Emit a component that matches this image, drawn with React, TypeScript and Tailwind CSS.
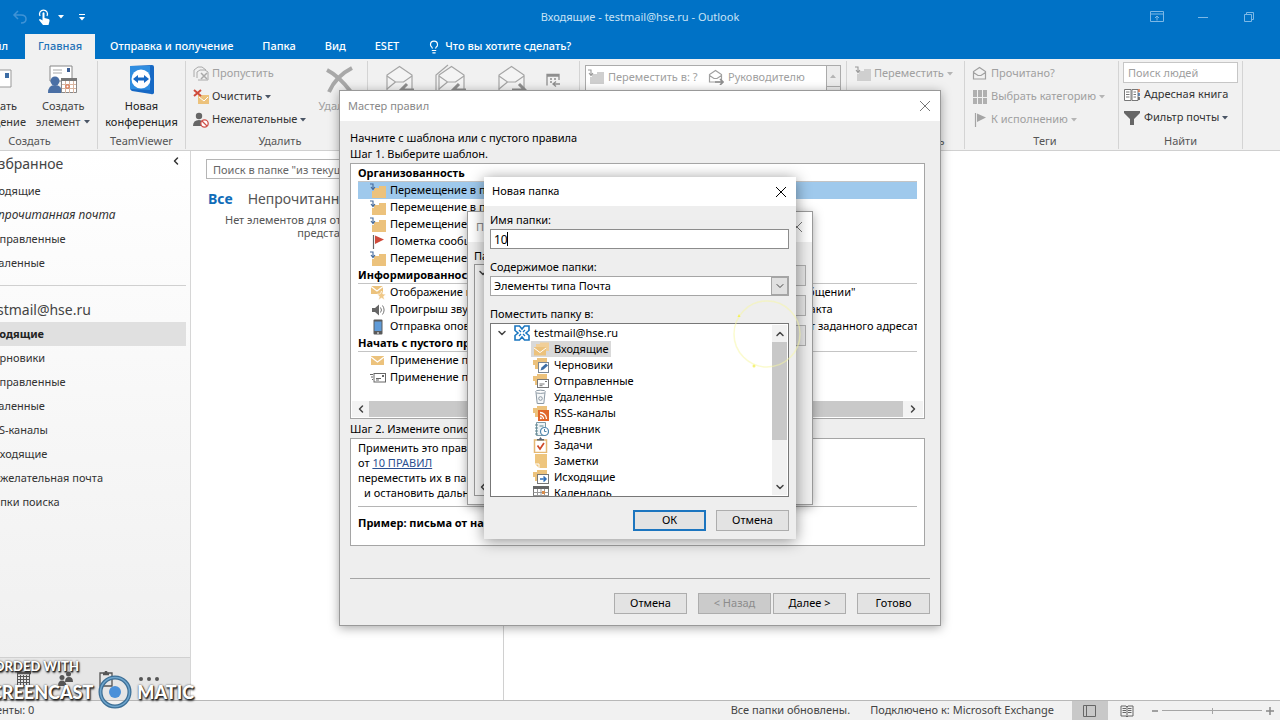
import type { ReactNode } from "react";
import { ChevronDown, ChevronLeft, ChevronRight, ChevronUp, Lightbulb } from "lucide-react";
import clsx from "clsx";

/* ---------- icons ---------- */

const Caret = ({ className = "text-gray-600" }: { className?: string }) => (
  <svg viewBox="0 0 6 4" className={clsx("w-1.5 h-1 shrink-0", className)}>
    <path d="M0 0h6L3 3.5z" fill="currentColor" />
  </svg>
);

const CloseX = ({ className }: { className?: string }) => (
  <svg viewBox="0 0 12 12" className={clsx("w-3 h-3", className)}>
    <path d="M1 1l10 10M11 1L1 11" stroke="currentColor" strokeWidth="1" fill="none" />
  </svg>
);

const FolderMove = ({ gray = false }: { gray?: boolean }) => (
  <svg viewBox="0 0 16 16" className="w-4 h-4 shrink-0">
    <path d="M4 5h5V3h7v12H2V8h2z" fill={gray ? "#cfcfcf" : "#ecc27c"} />
    <path d="M0 1h3v5M1 4l2 2.500L5 4" fill="none" stroke={gray ? "#999" : "#44699b"} strokeWidth="1.1" />
  </svg>
);

const FlagIcon = ({ gray = false }: { gray?: boolean }) => (
  <svg viewBox="0 0 16 16" className="w-4 h-4 shrink-0">
    <path d="M3.500 1v14" stroke={gray ? "#a5a5a5" : "#666"} strokeWidth="1.2" />
    <path d="M5 1.500L14 5.500L5 10z" fill={gray ? "#a5a5a5" : "#cf4a3a"} />
  </svg>
);

const MailStar = () => (
  <svg viewBox="0 0 16 16" className="w-4 h-4 shrink-0">
    <path d="M1 1h12v8H1z" fill="#ecc27c" />
    <path d="M1 1.500l6 4.500l6-4.500" fill="none" stroke="#fff" strokeWidth="1.200" />
    <path d="M11.500 6l1.300 3l3.200.2l-2.400 2.200l.9 3.600l-3-1.900l-3 1.900l.9-3.600L7 9.200l3.200-.2z" fill="#f0c887" stroke="#fff" strokeWidth=".6" />
  </svg>
);

const Speaker = () => (
  <svg viewBox="0 0 16 16" className="w-4 h-4 shrink-0">
    <path d="M2 6h3l4-3.500v11L5 10H2z" fill="#666" />
    <path d="M10.500 5.500q2 2.500 0 5M12.500 3.500q3.200 4.500 0 9" stroke="#777" fill="none" />
  </svg>
);

const Phone = () => (
  <svg viewBox="0 0 16 16" className="w-4 h-4 shrink-0">
    <rect x="3.500" y=".5" width="9" height="15" rx="1" fill="#5a5a5a" />
    <rect x="4.500" y="2.500" width="7" height="9.500" fill="#5f9bd8" />
    <path d="M7 14h2" stroke="#fff" />
  </svg>
);

const MailIcon = () => (
  <svg viewBox="0 0 16 16" className="w-4 h-4 shrink-0">
    <path d="M1 3h13v9H1z" fill="#ecc27c" />
    <path d="M1 4l6.500 5L14 4" fill="none" stroke="#fff" strokeWidth="1.200" />
  </svg>
);

const SentCard = () => (
  <svg viewBox="0 0 16 16" className="w-4 h-4 shrink-0">
    <rect x="4" y="3.500" width="11.500" height="8.500" fill="#fff" stroke="#666" />
    <path d="M0 4.500h3M1 7h2M2 9.500h1M6 8.500h5M6 10h3" stroke="#666" />
    <path d="M12 5h2v2h-2z" fill="#666" />
  </svg>
);

const ExchangeIcon = () => (
  <svg viewBox="0 0 16 16" className="w-4 h-4 shrink-0" fill="none" stroke="#1a76c0" strokeWidth="1.600">
    <path d="M1 5.500V1h4.500L8 4l2.500-3H15v4.500L12 8l3 2.500V15h-4.500L8 12l-2.500 3H1v-4.500L4 8z" />
    <path d="M5 5l2 2M11 5L9 7M5 11l2-2M11 11L9 9" strokeWidth="1.300" />
  </svg>
);

const FolderBase = ({ children }: { children?: ReactNode }) => (
  <svg viewBox="0 0 16 16" className="w-4 h-4 shrink-0">
    <path d="M0 3h4V1h10v11H2V8H0z" fill="#ecc27c" />
    {children}
  </svg>
);

const InboxFolder = () => (
  <svg viewBox="0 0 16 16" className="w-4 h-4 shrink-0">
    <path d="M3 3h4V1.500h9V10H3z" fill="#f1cf98" />
    <path d="M1 6h12v8.500H1z" fill="#ecc27c" />
    <path d="M1 7l6 4.500L13 7" fill="none" stroke="#fff" />
  </svg>
);

const DraftsFolder = () => (
  <FolderBase>
    <rect x="5.500" y="5.500" width="10" height="10" fill="#fff" stroke="#7b8794" />
    <path d="M7.500 13.500l1-3l4.500-4l2 2l-4.500 4z" fill="#3d6da5" />
  </FolderBase>
);

const SentFolder = () => (
  <FolderBase>
    <rect x="4.500" y="6.500" width="11" height="8" fill="#fff" stroke="#777" />
    <path d="M6.500 11h5M6.500 12.700h3M12 8.500h2" stroke="#777" />
  </FolderBase>
);

const TrashIcon = () => (
  <svg viewBox="0 0 16 16" className="w-4 h-4 shrink-0" fill="none" stroke="#8b98a3">
    <path d="M3 3.500l1.200 11h6.600L12 3.500" fill="#f5f7f8" />
    <ellipse cx="7.500" cy="2.800" rx="5" ry="1.600" fill="#fff" />
    <circle cx="7.500" cy="9.500" r="1.800" />
  </svg>
);

const RssFolder = () => (
  <FolderBase>
    <rect x="5" y="5" width="11" height="11" fill="#e0662b" />
    <path d="M7 10.500a3.500 3.500 0 0 1 3.500 3.500M7 7.500a6.500 6.500 0 0 1 6.500 6.500" fill="none" stroke="#fff" strokeWidth="1.300" />
    <circle cx="7.900" cy="13.200" r="1" fill="#fff" />
  </FolderBase>
);

const JournalIcon = () => (
  <svg viewBox="0 0 16 16" className="w-4 h-4 shrink-0" fill="none">
    <path d="M3.500 1.500h9v13h-9z" fill="#eef4f6" stroke="#7d9aa5" />
    <path d="M2 4h3M2 7h3M2 10h3M2 13h3M6.500 5h4" stroke="#5f8590" />
    <circle cx="11.500" cy="10.500" r="4" fill="#fff" stroke="#4f87ad" strokeWidth="1.200" />
    <path d="M11.500 8v2.500h2" stroke="#4f87ad" />
  </svg>
);

const TasksIcon = () => (
  <svg viewBox="0 0 16 16" className="w-4 h-4 shrink-0">
    <path d="M1.500 3h12v12.500h-12z" fill="#fff" stroke="#e5b873" strokeWidth="1.500" />
    <path d="M4 3.500h7V2H9L7.500 0L6 2H4z" fill="#5a6470" />
    <path d="M4.500 8.500l2.500 3.500l4-6" fill="none" stroke="#cf4a2a" strokeWidth="1.700" />
  </svg>
);

const NotesIcon = () => (
  <svg viewBox="0 0 16 16" className="w-4 h-4 shrink-0">
    <path d="M2 1h12v14H6l-4-4z" fill="#eec57d" />
    <path d="M2 11h4v4" fill="none" stroke="#fff" />
  </svg>
);

const OutboxFolder = () => (
  <FolderBase>
    <rect x="4.500" y="5.500" width="11" height="9" fill="#fff" stroke="#777" />
    <path d="M7 10h6M10.500 7.500L13 10l-2.500 2.500" fill="none" stroke="#2f6db5" strokeWidth="1.500" />
  </FolderBase>
);

const CalendarIcon = () => (
  <svg viewBox="0 0 16 16" className="w-4 h-4 shrink-0">
    <path d="M.5 1.500h15v13H.5z" fill="#fff" stroke="#777" />
    <path d="M0 1h16v3H0z" fill="#666" />
    <path d="M.5 7.500h15M.5 10.500h15M4.500 4v11M8 4v11M11.500 4v11" stroke="#999" />
    <rect x="9" y="6" width="3" height="3" fill="#d98c4a" />
  </svg>
);

/* Large envelope with an arrow, used by the reply and forward buttons */
const Envelope = ({ double = false, forward = false }: { double?: boolean; forward?: boolean }) => (
  <svg viewBox="0 0 32 32" className="w-8 h-8 shrink-0" fill="none" stroke="#a5a5a5" strokeWidth="1.200">
    {double && <path d="M1 28V11L13 1" />}
    <path d="M4 30V11l12.500-8.500L29 11v19z" fill="#f4f4f4" />
    <path d="M4 12l8.500 6h8l8.500-6M12.500 18L4 25" />
    {forward ? (
      <path d="M17 26h12M24 20l6 6l-6 6" stroke="#8f8f8f" strokeWidth="3" />
    ) : (
      <path d="M18 26h13M24 20l-6 6l6 6" stroke="#8f8f8f" strokeWidth="3" />
    )}
  </svg>
);

const SmallMail = ({ arrow = false }: { arrow?: boolean }) => (
  <svg viewBox="0 0 16 16" className="w-4 h-4 shrink-0" fill="none" stroke="#a0a0a0" strokeWidth="1.200">
    <path d="M1.500 13V5.500L7.500 1.500l6 4V13zM1.500 6.500L6 9.500h3l4.500-3" />
    {arrow && <path d="M7 13h8M12 10l3 3l-3 3" stroke="#8f8f8f" strokeWidth="1.600" />}
  </svg>
);

/* ---------- ribbon ---------- */

interface GroupProps {
  label: string;
  className: string;
  children: ReactNode;
}

function Group({ label, className, children }: GroupProps) {
  return (
    <section className={clsx("flex flex-col shrink-0 pt-px border-r border-[#d4d4d4] h-[88px]", className)}>
      <div className="flex-1 flex">{children}</div>
      <p className="text-center leading-4 text-[#555]">{label}</p>
    </section>
  );
}

interface SmallButtonProps {
  icon: ReactNode;
  text: string;
  caret?: boolean;
  disabled?: boolean;
}

function SmallButton({ icon, text, caret, disabled }: SmallButtonProps) {
  return (
    <button
      disabled={disabled}
      className={clsx("flex items-center gap-[3px] h-[23px] whitespace-nowrap", disabled ? "text-[#a0a0a0]" : "text-[#333]")}
    >
      {icon}
      {text}
      {caret && <Caret className={disabled ? "text-[#b5b5b5]" : "text-gray-600"} />}
    </button>
  );
}

function Ribbon() {
  return (
    <div className="flex items-start pt-0.5 h-[92px] shrink-0 bg-[#f1f1f1] border-b border-[#d0d0d0] text-[11px] overflow-hidden">
      <Group label="Создать" className="w-[136px] -ml-[38px]">
        <button className="w-[68px] flex flex-col items-center leading-4 text-[#333] pt-0.5">
          <svg viewBox="0 0 32 32" className="w-8 h-8 mb-0.5">
            <path d="M3 6h28v17H3z" fill="#fff" stroke="#999" />
            <path d="M25 9h4v5h-4z" fill="#3d6da5" />
            <path d="M9 15h9M9 18h9" stroke="#999" />
          </svg>
          Создать сообщение
        </button>
        <button className="w-[68px] flex flex-col items-center leading-4 text-[#444] pt-0.5">
          <svg viewBox="0 0 32 32" className="w-8 h-8 mb-0.5">
            <path d="M3 2h22v15H3z" fill="#fff" stroke="#888" />
            <path d="M20 4h3v4h-3z" fill="#3d5f95" />
            <path d="M6 6h9M6 9h9" stroke="#aaa" />
            <circle cx="8" cy="17" r="4.500" fill="#4a6fa5" />
            <path d="M1 29q0-8 7-8t7 8z" fill="#4a6fa5" />
            <path d="M14.500 14.500h15v14h-15z" fill="#fff" stroke="#888" />
            <path d="M14 14h16v3H14z" fill="#777" />
            <path d="M15 20.500h14M15 24.500h14M18.500 17v12M22.500 17v12M26.500 17v12" stroke="#d9b5a0" />
            <path d="M19 21h3v3h-3z" fill="none" stroke="#d86b40" />
          </svg>
          Создать
          <span className="flex items-center gap-1">элемент <Caret /></span>
        </button>
      </Group>
      <Group label="TeamViewer" className="w-[88px]">
        <button className="w-full flex flex-col items-center leading-4 text-[#222] pt-0.5">
          <svg viewBox="0 0 32 32" className="w-8 h-8 mb-0.5">
            <path d="M4 2l22-1q2 0 2 2v26q-1 2-3 1L6 27q-2-1-2-3z" fill="#1668c4" />
            <path d="M4 2h20v24L4 25z" fill="#2f8de0" />
            <circle cx="15" cy="15" r="9.500" fill="#fff" />
            <path d="M7 15l5-4v2.500h6V11l5 4l-5 4v-2.500h-6V19z" fill="#1668c4" />
          </svg>
          Новая
          <span>конференция</span>
        </button>
      </Group>
      <Group label="Удалить" className="w-[182px] pl-[7px]">
        <div className="flex flex-col w-[120px]">
          <SmallButton
            disabled
            text="Пропустить"
            icon={
              <svg viewBox="0 0 16 16" className="w-4 h-4 shrink-0" fill="none" stroke="#aaa">
                <path d="M1 11V4l4-3h4l4 3M4 12V6l3-2h5l3 2v8H5" />
                <path d="M8 7l6 6M14 7l-6 6" strokeWidth="1.500" />
              </svg>
            }
          />
          <SmallButton
            text="Очистить"
            caret
            icon={
              <svg viewBox="0 0 16 16" className="w-4 h-4 shrink-0">
                <path d="M5 6h11v9H5z" fill="#ecc27c" />
                <path d="M6 8l5 4l4-4" fill="none" stroke="#fff" />
                <path d="M1 1l7 6M8 1L1 7" stroke="#cf4a3a" strokeWidth="2" />
              </svg>
            }
          />
          <SmallButton
            text="Нежелательные"
            caret
            icon={
              <svg viewBox="0 0 16 16" className="w-4 h-4 shrink-0">
                <circle cx="6" cy="4" r="3.200" fill="#666" />
                <path d="M0 14q0-6 6-6t5 6z" fill="#666" />
                <circle cx="11.500" cy="11.500" r="3.700" fill="#fff" stroke="#d0504a" strokeWidth="1.300" />
                <path d="M9 9l5 5" stroke="#d0504a" strokeWidth="1.300" />
              </svg>
            }
          />
        </div>
        <button disabled className="flex flex-col items-center w-[54px] text-[#a0a0a0] leading-4 pt-0.5">
          <svg viewBox="0 0 32 32" className="w-8 h-8 mb-0.5">
            <path d="M3 6q12 6 24 22M28 4Q12 12 5 28" fill="none" stroke="#a8a8a8" strokeWidth="4" />
          </svg>
          Удалить
        </button>
      </Group>
      <Group label="Ответить" className="w-[212px] pl-[15px]">
        <div className="flex items-start gap-5 pt-0.5">
          <button disabled aria-label="Ответить"><Envelope /></button>
          <button disabled aria-label="Ответить всем"><Envelope double /></button>
          <button disabled aria-label="Переслать" className="pl-2"><Envelope forward /></button>
        </div>
        <button disabled aria-label="Собрание" className="self-start pt-2.5 pl-[18px]">
          <svg viewBox="0 0 16 16" className="w-4 h-4" fill="none" stroke="#8f8f8f">
            <path d="M2 13.500V2.500h12V8M2 4h12M5 7h2M9 7h2M5 10h2" strokeWidth="1.300" />
            <path d="M8 12h7M11 9.500L8 12l3 2.500" strokeWidth="1.300" />
          </svg>
        </button>
      </Group>
      <Group label="Быстрые действия" className="w-[267px] px-[5px]">
        <div className="flex-1 flex h-[66px] mt-[3px] border border-[#ababab] bg-white text-[#a0a0a0]">
          <div className="flex-1 grid grid-cols-[120px_1fr] auto-rows-[22px] pl-0.5">
            <button disabled className="flex items-center gap-1 whitespace-nowrap"><FolderMove gray />Переместить в: ?</button>
            <button disabled className="flex items-center gap-1"><SmallMail arrow />Руководителю</button>
            <button disabled className="flex items-center gap-1 whitespace-nowrap"><SmallMail />Сообщение</button>
            <button disabled className="flex items-center gap-1"><SmallMail />Готово</button>
          </div>
          <div className="w-3.5 border-l border-[#ababab] bg-[#ececec] flex flex-col">
            <button disabled aria-label="Вверх" className="h-[21px] border-t border-[#ababab] flex items-center justify-center rotate-180">
              <Caret className="text-[#b5b5b5]" />
            </button>
          </div>
        </div>
      </Group>
      <Group label="Переместить" className="w-[118px] pl-2">
        <div className="flex flex-col">
          <SmallButton disabled caret text="Переместить" icon={<FolderMove gray />} />
        </div>
      </Group>
      <Group label="Теги" className="w-[154px] pl-[7px]">
        <div className="flex flex-col">
          <SmallButton disabled text="Прочитано?" icon={<SmallMail />} />
          <SmallButton
            disabled
            caret
            text="Выбрать категорию"
            icon={
              <svg viewBox="0 0 16 16" className="w-4 h-4 shrink-0" fill="#b0b0b0">
                <path d="M1 1h4v7H1zM6 1h4v7H6zM11 1h4v7h-4zM1 9h4v6H1zM6 9h4v6H6zM11 9h4v6h-4z" />
              </svg>
            }
          />
          <SmallButton disabled caret text="К исполнению" icon={<FlagIcon gray />} />
        </div>
      </Group>
      <Group label="Найти" className="w-[124px] px-1">
        <div className="flex flex-col w-full">
          <input
            aria-label="Поиск людей"
            placeholder="Поиск людей"
            className="w-full h-[21px] border border-[#c6c6c6] bg-white px-1 placeholder:text-[#a0a0a0]"
          />
          <SmallButton
            text="Адресная книга"
            icon={
              <svg viewBox="0 0 16 16" className="w-[18px] h-4 shrink-0" fill="none" stroke="#777">
                <path d="M.5 2.500h6.500v11H.5zM8 2.500h6v11H8z" fill="#fff" />
                <path d="M2 5h3.500M2 7.500h3.500M2 10h3.500M9.500 5H12M9.500 7.500H12M9.500 10H12" />
                <path d="M15 2v3" stroke="#d86b40" strokeWidth="1.500" />
                <path d="M15 6v3" stroke="#3d6da5" strokeWidth="1.500" />
                <path d="M15 10v3" stroke="#555" strokeWidth="1.500" />
              </svg>
            }
          />
          <SmallButton
            text="Фильтр почты"
            caret
            icon={
              <svg viewBox="0 0 16 16" className="w-[18px] h-4 shrink-0" fill="#666">
                <path d="M0 1h16v2l-6 6v6H6V9L0 3z" />
              </svg>
            }
          />
        </div>
      </Group>
    </div>
  );
}

function TitleBar() {
  return (
    <header className="bg-[#0072c6] text-white shrink-0">
      <div className="grid grid-cols-[1fr_auto_1fr] items-center h-[34px]">
        <div className="flex items-center pl-3">
          <button aria-label="Отменить" className="w-4 h-4 text-[#3f93d6]">
            <svg viewBox="0 0 16 16" fill="none" stroke="currentColor" strokeWidth="1.500">
              <path d="M6 2L2 6l4 4M2 6h7q5 0 5 4t-5 4" />
            </svg>
          </button>
          <button aria-label="Сенсорный режим" className="flex items-center gap-1.5 ml-2">
            <svg viewBox="0 0 16 18" className="w-4 h-[18px]">
              <path d="M4 8a4 4 0 1 1 7 0" fill="none" stroke="#fff" strokeWidth="1.300" />
              <path d="M6.500 5q1-1.500 2 0v5l4 1q1.500.5 1 2l-1 4H7l-4-5q.5-1.500 2-.5l1.500 1z" fill="#fff" />
            </svg>
            <Caret className="text-white" />
          </button>
          <button aria-label="Настройка панели" className="ml-[15px] flex flex-col items-center gap-0.5">
            <span className="w-1.5 h-px bg-white" />
            <Caret className="text-white" />
          </button>
        </div>
        <h1 className="text-[11px] text-[#c8e2f5]">Входящие - testmail@hse.ru - Outlook</h1>
        <div className="flex justify-end pr-2 text-[#7db8e6]">
          <button aria-label="Параметры ленты" className="w-[46px] flex justify-center">
            <svg viewBox="0 0 14 12" className="w-3.5 h-3" fill="none" stroke="currentColor">
              <path d="M.5.5h13v10H.5zM.5 3h13M7 9.500V5M5 7l2-2l2 2" />
            </svg>
          </button>
          <button aria-label="Свернуть" className="w-[46px] flex justify-center items-center">
            <span className="w-2.5 h-px bg-current" />
          </button>
          <button aria-label="Восстановить" className="w-[46px] flex justify-center">
            <svg viewBox="0 0 12 12" className="w-3 h-3" fill="none" stroke="currentColor">
              <path d="M1.500 3.500h7v7h-7zM3.500 3.500v-2h7v7h-2" />
            </svg>
          </button>
        </div>
      </div>
      <nav className="flex h-[25px] text-[11px] font-medium overflow-hidden">
        <button className="w-[60px] -ml-[35px] pl-3.5 text-left">Файл</button>
        <button className="w-[70px] bg-[#f1f1f1] text-[#1f72b8]">Главная</button>
        <button className="ml-[15px]">Отправка и получение</button>
        <button className="ml-[29px]">Папка</button>
        <button className="ml-[29px]">Вид</button>
        <button className="ml-[29px]">ESET</button>
        <button className="ml-7 flex items-center gap-1">
          <Lightbulb className="w-3.5 h-3.5" strokeWidth={2} />
          Что вы хотите сделать?
        </button>
      </nav>
    </header>
  );
}

/* ---------- main area ---------- */

const favourites = ["Входящие", "Непрочитанная почта", "Отправленные", "Удаленные"];
const mailbox = ["Входящие", "Черновики", "Отправленные", "Удаленные", "RSS-каналы", "Исходящие", "Нежелательная почта", "Папки поиска"];

function Sidebar() {
  return (
    <aside className="w-[191px] shrink-0 flex flex-col overflow-hidden border-r border-[#d6d6d6] bg-linear-to-b from-white to-[#efefef] text-[11px] text-[#333]">
      <div className="flex items-center justify-between h-7 pr-2 pb-0.5">
        <h2 className="-ml-3 text-sm text-[#444]">Избранное</h2>
        <button aria-label="Свернуть область папок" className="pb-1.5"><ChevronLeft className="w-3 h-3" strokeWidth={3} /></button>
      </div>
      <ul>
        {favourites.map((name, i) => (
          <li key={name} className={clsx("h-6 leading-6", i === 1 ? "-ml-4 text-xs italic" : "-ml-3.5")}>{name}</li>
        ))}
      </ul>
      <hr className="mt-2.5 mr-1 border-[#d0d0d0]" />
      <h2 className="-ml-4 mt-3 h-6 leading-6 text-sm text-[#444]">testmail@hse.ru</h2>
      <ul>
        {mailbox.map((name, i) => (
          <li key={name} className={clsx("h-6 leading-6 mr-1", i === 0 && "bg-[#e0e0e0] font-bold text-[#222]")}>
            <span className="inline-block -ml-3.5">{name}</span>
          </li>
        ))}
      </ul>
      <nav className="mt-auto h-[43px] border-t border-[#d0d0d0] bg-[#e6e6e6] flex items-center pl-4 gap-[25px] text-[#555]">
        <button aria-label="Календарь">
          <svg viewBox="0 0 16 16" className="w-4 h-4" fill="none" stroke="currentColor">
            <path d="M1.500 1v14M4.500 4v11M7.500 4v11M10.500 4v11M13.500 1v14M1 5.500h13M1 8.500h13M1 11.500h13M1 14.500h13" />
            <path d="M1 2h14" strokeWidth="2.500" />
          </svg>
        </button>
        <button aria-label="Люди">
          <svg viewBox="0 0 16 16" className="w-4 h-4" fill="currentColor">
            <circle cx="11.500" cy="3" r="2.500" />
            <path d="M8 11q0-5 4-5t4 5z" />
            <circle cx="5" cy="6.500" r="2.500" />
            <path d="M1 15q0-5.500 4-5.500t4.500 5.500z" />
          </svg>
        </button>
        <button aria-label="Задачи">
          <svg viewBox="0 0 16 16" className="w-4 h-4" fill="none" stroke="currentColor" strokeWidth="1.300">
            <path d="M2 2h12v13H2z" />
            <path d="M5 3h6M8 0v3" strokeWidth="2.500" />
          </svg>
        </button>
        <button aria-label="Другое">
          <svg viewBox="0 0 20 4" className="w-5 h-1" fill="currentColor">
            <circle cx="2" cy="2" r="2" />
            <circle cx="10" cy="2" r="2" />
            <circle cx="18" cy="2" r="2" />
          </svg>
        </button>
      </nav>
    </aside>
  );
}

function MessageList() {
  return (
    <section className="w-[313px] shrink-0 border-r border-[#d0d0d0] pl-[15px] pr-3 pt-2">
      <input
        aria-label="Поиск в папке"
        placeholder={'Поиск в папке "из текущего почтового ящика"'}
        className="block w-full h-5 border border-[#b5b5b5] px-1.5 text-[11px] placeholder:text-[#666]"
      />
      <div className="flex gap-[15px] mt-2 pl-0.5 text-sm leading-6">
        <button className="font-bold text-[#0f6cb8]">Все</button>
        <button className="text-[#555]">Непрочитанные</button>
      </div>
      <p className="mr-[18px] mt-0.5 text-center text-[11px] leading-[13px] text-[#555]">
        Нет элементов для отображения в данном
        <br />
        представлении.
      </p>
    </section>
  );
}

function StatusBar() {
  return (
    <footer className="h-5 shrink-0 flex items-center border-t border-[#b8b8b8] bg-[#f1f1f1] text-[11px] text-[#444]">
      <span className="-ml-8">Элементы: 0</span>
      <span className="ml-auto">Все папки обновлены.</span>
      <span className="ml-5">Подключено к: Microsoft Exchange</span>
      <button aria-label="Обычный" className="ml-[18px] w-9 h-full bg-[#c8c8c8] flex items-center justify-center">
        <svg viewBox="0 0 14 14" className="w-3.5 h-3.5" fill="none" stroke="#666">
          <path d="M.5 1.500h12v11H.5zM3.500 1.500v11" />
        </svg>
      </button>
      <button aria-label="Чтение" className="w-[38px] flex justify-center">
        <svg viewBox="0 0 14 14" className="w-3.5 h-3.5" fill="none" stroke="#666">
          <path d="M1 2h5l1 1l1-1h5v10H8l-1 1l-1-1H1zM7 3v10M2.500 4.500H6M2.500 6.500H6M2.500 8.500H6M8 4.500h3.500M8 6.500h3.500M8 8.500h3.500" />
        </svg>
      </button>
      <button aria-label="Уменьшить" className="ml-1.5 w-1.5 h-0.5 bg-[#a0a0a0]" />
      <input
        type="range"
        aria-label="Масштаб"
        defaultValue={50}
        className="ml-1 w-[100px] h-px appearance-none bg-[#a5a5a5] [&::-webkit-slider-thumb]:appearance-none [&::-webkit-slider-thumb]:w-px [&::-webkit-slider-thumb]:h-1.5 [&::-webkit-slider-thumb]:bg-[#a5a5a5]"
      />
      <button aria-label="Увеличить" className="ml-1 mr-1.5">
        <svg viewBox="0 0 8 8" className="w-2 h-2"><path d="M4 0v8M0 4h8" stroke="#888" strokeWidth="1.500" /></svg>
      </button>
    </footer>
  );
}

/* ---------- dialogs ---------- */

interface DialogProps {
  title: string;
  className: string;
  active?: boolean;
  children: ReactNode;
}

function Dialog({ title, className, active, children }: DialogProps) {
  return (
    <div className="absolute inset-0 pb-1 flex items-center justify-center">
      <div
        role="dialog"
        aria-label={title}
        className={clsx(
          "bg-[#eee] text-[11px] text-black",
          active ? "shadow-[0_2px_14px_rgba(0,0,0,0.45)]" : "border border-[#999] shadow-[0_2px_10px_rgba(0,0,0,0.35)]",
          className
        )}
      >
        <div className={clsx("flex items-center justify-between bg-white pl-2 pr-[9px]", active ? "h-[29px]" : "h-[30px] text-[#888]")}>
          <h2>{title}</h2>
          <button aria-label="Закрыть"><CloseX className={active ? "text-black" : "text-[#777]"} /></button>
        </div>
        {children}
      </div>
    </div>
  );
}

function DialogButton({ text, primary, disabled }: { text: string; primary?: boolean; disabled?: boolean }) {
  return (
    <button
      disabled={disabled}
      className={clsx(
        "w-[73px] h-[21px] shrink-0",
        primary ? "border-2 border-[#1c75bf]" : "border border-[#adadad]",
        disabled ? "bg-[#cbcbcb] text-[#8c8c8c]" : "bg-[#e3e3e3]"
      )}
    >
      {text}
    </button>
  );
}

const templates = [
  {
    heading: "Организованность",
    rows: [
      { icon: <FolderMove />, text: "Перемещение в папку сообщений от контакта" },
      { icon: <FolderMove />, text: "Перемещение в папку сообщений со словами" },
      { icon: <FolderMove />, text: "Перемещение сообщений для общей группы" },
      { icon: <FlagIcon />, text: "Пометка сообщений от указанного контакта" },
      { icon: <FolderMove />, text: "Перемещение элементов RSS в папку" },
    ],
  },
  {
    heading: "Информированность",
    rows: [
      { icon: <MailStar />, text: 'Отображение почты от указанного контакта в окне "Оповещение о новом сообщении"' },
      { icon: <Speaker />, text: "Проигрыш звука при получении электронных сообщений от выбранного контакта" },
      { icon: <Phone />, text: "Отправка оповещения на мобильное устройство при получении сообщений от заданного адресата" },
    ],
  },
  {
    heading: "Начать с пустого правила",
    rows: [
      { icon: <MailIcon />, text: "Применение правила к полученным сообщениям" },
      { icon: <SentCard />, text: "Применение правила к отправленным сообщениям" },
    ],
  },
];

function RulesWizard() {
  return (
    <Dialog title="Мастер правил" className="w-[602px]">
      <div className="px-2.5 pt-[9px] pb-[11px]">
        <p className="leading-4">Начните с шаблона или с пустого правила</p>
        <p className="leading-4">Шаг 1. Выберите шаблон.</p>
        <div className="mt-px mr-[5px] border border-[#a5a5a5] bg-white">
          <div className="px-[7px] pt-px">
            {templates.map((group) => (
              <section key={group.heading}>
                <h3 className="h-[17px] leading-4 font-bold border-b border-[#c4c4c4]">{group.heading}</h3>
                <ul>
                  {group.rows.map((row, i) => (
                    <li
                      key={row.text}
                      className={clsx(
                        "flex items-center gap-1 h-[17px] pl-3 overflow-hidden whitespace-nowrap",
                        group === templates[0] && i === 0 && "bg-[#9fc9ec]"
                      )}
                    >
                      {row.icon}
                      {row.text}
                    </li>
                  ))}
                </ul>
              </section>
            ))}
          </div>
          <div className="mt-[15px] mb-px mx-px flex h-4 bg-[#f3f3f3] text-[#444]">
            <button aria-label="Влево" className="w-[17px] flex items-center justify-center"><ChevronLeft className="w-3 h-3" strokeWidth={3} /></button>
            <div className="flex-1 bg-[#c9c9c9]" />
            <button aria-label="Вправо" className="w-5 flex items-center justify-center"><ChevronRight className="w-3 h-3" strokeWidth={3} /></button>
          </div>
        </div>
        <p className="mt-0.5 leading-4">Шаг 2. Измените описание правила</p>
        <div className="mt-px mr-[5px] px-[7px] pt-px h-[108px] border border-[#a5a5a5] bg-white leading-[15px]">
          <p>Применить это правило после получения</p>
          <p>от <a href="#rule" className="underline text-[#2b4f91]">10 ПРАВИЛ</a></p>
          <p>переместить их в папку</p>
          <p className="pl-1.5">и остановить дальнейшую обработку правил</p>
          <hr className="mt-1.5 mb-2 border-[#b5b5b5]" />
          <p className="font-bold">Пример: письма от начальника в папку</p>
        </div>
        <hr className="mt-8 border-[#a5a5a5]" />
        <div className="mt-3.5 flex justify-end">
          <DialogButton text="Отмена" />
          <span className="w-[11px]" />
          <DialogButton text="< Назад" disabled />
          <span className="w-0.5" />
          <DialogButton text="Далее >" />
          <span className="w-[11px]" />
          <DialogButton text="Готово" />
        </div>
      </div>
    </Dialog>
  );
}

function ChooseFolderDialog() {
  return (
    <Dialog title="Правила и оповещения" className="w-[346px]">
      <div className="px-1.5 pt-1.5 pb-2">
        <p className="leading-4">Папка:</p>
        <div className="flex justify-between items-start">
          <div className="w-[240px] h-[232px] border border-[#999] bg-[#f6f6f6] flex flex-col justify-between text-[#444]">
            <ChevronDown className="w-3 h-3 m-0.5" strokeWidth={3} />
            <ChevronLeft className="w-3 h-3 m-0.5" strokeWidth={3} />
          </div>
          <div className="flex flex-col gap-[9px] pt-px">
            <DialogButton text="ОК" />
            <DialogButton text="Отмена" />
            <DialogButton text="Создать..." />
          </div>
        </div>
      </div>
    </Dialog>
  );
}

const folders = [
  { name: "Входящие", icon: <InboxFolder /> },
  { name: "Черновики", icon: <DraftsFolder /> },
  { name: "Отправленные", icon: <SentFolder /> },
  { name: "Удаленные", icon: <TrashIcon /> },
  { name: "RSS-каналы", icon: <RssFolder /> },
  { name: "Дневник", icon: <JournalIcon /> },
  { name: "Задачи", icon: <TasksIcon /> },
  { name: "Заметки", icon: <NotesIcon /> },
  { name: "Исходящие", icon: <OutboxFolder /> },
  { name: "Календарь", icon: <CalendarIcon /> },
];

function NewFolderDialog() {
  return (
    <Dialog title="Новая папка" className="w-[312px]" active>
      <div className="pl-1.5 pr-[7px] pt-1.5 pb-2">
        <label htmlFor="folder-name" className="block leading-4 mb-px">Имя папки:</label>
        <div className="relative">
          <input
            id="folder-name"
            defaultValue="10"
            className="block w-full h-5 border border-[#8c8c8c] bg-white px-[3px] text-xs caret-transparent"
          />
          <span className="absolute left-[17px] top-[3px] w-px h-3.5 bg-black" />
        </div>
        <label htmlFor="folder-type" className="block leading-4 mt-2.5 mb-px">Содержимое папки:</label>
        <div className="relative">
          <select id="folder-type" className="block w-full h-5 appearance-none border border-[#a5a5a5] bg-white px-[3px]">
            <option>Элементы типа Почта</option>
          </select>
          <span className="absolute right-px top-px w-[17px] h-[18px] border border-[#a5a5a5] bg-[#e0e0e0] flex items-center justify-center pointer-events-none">
            <ChevronDown className="w-3 h-3 text-[#444]" strokeWidth={2} />
          </span>
        </div>
        <p className="leading-4 mt-2.5 mb-px">Поместить папку в:</p>
        <div className="flex h-[174px] border border-[#777] bg-white overflow-hidden">
          <div className="flex-1 pt-px overflow-hidden">
            <div className="flex items-center h-4 pl-[5px] gap-1">
              <ChevronDown className="w-3 h-3 mr-0.5 text-[#444]" strokeWidth={3} />
              <ExchangeIcon />
              testmail@hse.ru
            </div>
            <ul className="pl-10">
              {folders.map((folder, i) => (
                <li key={folder.name} className={clsx("flex items-center gap-[5px] h-4 w-fit px-0.5", i === 0 && "bg-[#d9d9d9]")}>
                  {folder.icon}
                  {folder.name}
                </li>
              ))}
            </ul>
          </div>
          <div className="w-[15px] my-px mr-px flex flex-col bg-[#f1f1f1] text-[#444]">
            <button aria-label="Вверх" className="h-[17px] flex items-center justify-center"><ChevronUp className="w-3 h-3" strokeWidth={3} /></button>
            <div className="h-[98px] bg-[#c8c8c8]" />
            <button aria-label="Вниз" className="mt-auto h-[17px] flex items-center justify-center"><ChevronDown className="w-3 h-3" strokeWidth={3} /></button>
          </div>
        </div>
        <div className="mt-[13px] flex justify-end gap-2.5">
          <DialogButton text="ОК" primary />
          <DialogButton text="Отмена" />
        </div>
      </div>
    </Dialog>
  );
}

/* Recorder mark in the lower left corner */
function Watermark() {
  return (
    <div className="absolute left-0 bottom-2.5 w-[195px] font-[Lato,sans-serif] font-black text-white [text-shadow:1px_1px_1px_#222,1px_2px_2px_#444,0_0_2px_#444] pointer-events-none">
      <p className="-ml-[30px] text-[13px] leading-4">RECORDED WITH</p>
      <div className="-ml-5 flex items-center gap-1 text-lg leading-8">
        <span>SCREENCAST</span>
        <svg viewBox="0 0 36 36" className="w-9 h-9 shrink-0">
          <circle cx="18" cy="18" r="14.500" fill="none" stroke="#3d6f96" strokeWidth="4" />
          <circle cx="18" cy="18" r="14.500" fill="none" stroke="#6fa5cc" strokeWidth="1.500" />
          <circle cx="18" cy="18" r="6" fill="#4a90d9" />
        </svg>
        <span>MATIC</span>
      </div>
    </div>
  );
}

export default function App() {
  return (
    <div className="relative flex flex-col h-screen overflow-hidden bg-white font-['Noto_Sans','Open_Sans',sans-serif]">
      <TitleBar />
      <Ribbon />
      <main className="flex-1 flex min-h-0">
        <Sidebar />
        <MessageList />
        <div className="flex-1" />
      </main>
      <StatusBar />
      <RulesWizard />
      <ChooseFolderDialog />
      <NewFolderDialog />
      {/* click ring around the cursor */}
      <svg viewBox="0 0 70 70" className="absolute left-[732px] top-[299px] w-[70px] h-[70px] pointer-events-none" fill="none">
        <circle cx="35" cy="35" r="33" stroke="#f7f7a0" strokeWidth="1.500" opacity=".5" />
        <path d="M5.500 18l1.500-3l1.500 3z" fill="#f3f05a" />
        <circle cx="22" cy="67" r="1.500" fill="#f5f27a" />
      </svg>
      <Watermark />
    </div>
  );
}
